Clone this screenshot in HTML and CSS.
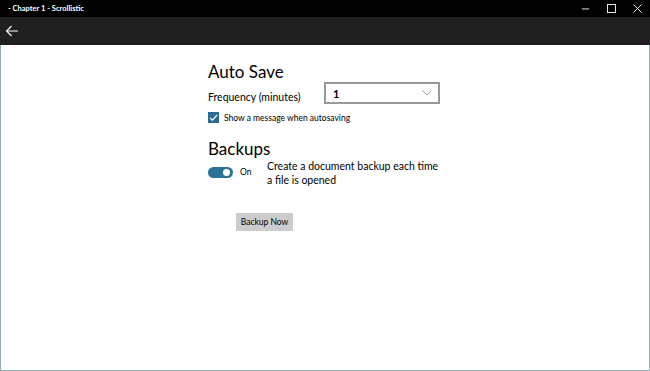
FILE: index.html
```html
<!DOCTYPE html>
<html lang="en">
<head>
  <meta charset="UTF-8" />
  <title>Chapter 1 - Scrollistic</title>
  <link rel="stylesheet" href="styles.css">
</head>
<body>
  <div class="window">
    <div class="titlebar">
      <span class="title">- Chapter 1 - Scrollistic</span>
      <div class="controls">
        <span class="ctl">
          <svg width="9" height="9" viewBox="0 0 10 10"><path d="M1 5.5h8" stroke="#fff" stroke-width="1"/></svg>
        </span>
        <span class="ctl">
          <svg width="9" height="9" viewBox="0 0 10 10"><rect x="0.5" y="0.5" width="9" height="9" fill="none" stroke="#fff" stroke-width="1"/></svg>
        </span>
        <span class="ctl">
          <svg width="9" height="9" viewBox="0 0 10 10"><path d="M0.5 0.5l9 9M9.5 0.5l-9 9" stroke="#fff" stroke-width="1"/></svg>
        </span>
      </div>
    </div>

    <div class="navbar">
      <svg class="back" width="14" height="12" viewBox="0 0 14 12">
        <path d="M13 6H1.5M6.5 1L1.5 6l5 5" fill="none" stroke="#fff" stroke-width="1.1"/>
      </svg>
    </div>

    <div class="content">
      <div class="settings">
        <h2>Auto Save</h2>
        <div class="freq-row">
          <span class="label">Frequency (minutes)</span>
          <div class="dropdown">
            <span class="value">1</span>
            <svg width="10" height="6" viewBox="0 0 10 6"><path d="M0.5 0.5L5 5l4.5-4.5" fill="none" stroke="#999" stroke-width="1"/></svg>
          </div>
        </div>
        <label class="check-row">
          <span class="checkbox">
            <svg width="11" height="11" viewBox="0 0 11 11"><path d="M2 5.8l2.4 2.4L9.2 3" fill="none" stroke="#fff" stroke-width="1.2"/></svg>
          </span>
          <span class="small">Show a message when autosaving</span>
        </label>

        <h2 class="backups">Backups</h2>
        <div class="toggle-row">
          <span class="toggle"><span class="knob"></span></span>
          <span class="small on">On</span>
          <span class="desc">Create a document backup each time<br>a file is opened</span>
        </div>

        <button class="btn">Backup Now</button>
      </div>
    </div>
  </div>
</body>
</html>
```

FILE: styles.css
```css
* {
  box-sizing: border-box;
}

html, body {
  margin: 0;
  height: 100%;
}

body {
  font-family: 'Lato', 'Noto Sans', sans-serif;
  color: #000;
  background: #fff;
}

.window {
  height: 371px;
  border: 1px solid #8fb1bb;
  display: flex;
  flex-direction: column;
}

.titlebar {
  height: 17px;
  background: #000;
  color: #fff;
  display: flex;
  align-items: center;
  justify-content: space-between;
  margin: -1px -1px 0;
}

.title {
  font-size: 7.5px;
  font-weight: 700;
  padding-left: 8px;
}

.controls {
  display: flex;
}

.ctl {
  width: 26px;
  display: flex;
  justify-content: center;
}

.navbar {
  height: 28px;
  background: #1f1f1f;
  display: flex;
  align-items: center;
  padding-left: 5px;
  margin: 0 -1px;
}

.content {
  flex: 1;
  padding: 16px 0 0 207px;
}

.settings {
  display: flex;
  flex-direction: column;
  align-items: flex-start;
}

h2 {
  font-size: 17px;
  font-weight: 400;
  margin: 0;
  line-height: 22px;
}

.freq-row {
  display: flex;
  align-items: flex-start;
  margin-top: -1px;
}

.label {
  font-size: 10.5px;
  width: 116px;
  padding-top: 9px;
}

.dropdown {
  width: 116px;
  height: 22px;
  border: 2px solid #999;
  display: flex;
  align-items: center;
  justify-content: space-between;
  padding: 0 6px 0 7px;
}

.value {
  font-size: 11px;
  font-weight: 700;
}

.check-row {
  display: flex;
  align-items: center;
  margin-top: 8px;
}

.checkbox {
  width: 11px;
  height: 11px;
  background: #2d6b97;
  display: flex;
  margin-right: 5px;
}

.small {
  font-size: 8.5px;
}

.backups {
  margin-top: 15px;
}

.toggle-row {
  display: flex;
  align-items: flex-start;
  margin-top: 2px;
}

.toggle {
  width: 25px;
  height: 11px;
  border-radius: 6px;
  background: #2b7294;
  display: flex;
  align-items: center;
  justify-content: flex-end;
  padding-right: 3px;
  margin-top: 5px;
}

.knob {
  width: 7px;
  height: 7px;
  border-radius: 50%;
  background: #fff;
}

.on {
  margin-left: 7px;
  margin-top: 5px;
  width: 27px;
}

.desc {
  font-size: 10.5px;
  line-height: 14px;
  margin-top: -3px;
}

.btn {
  margin: 26px 0 0 28px;
  font-family: inherit;
  font-size: 8.5px;
  background: #cccccc;
  border: none;
  border-radius: 0;
  height: 18px;
  width: 57px;
  padding: 0;
  color: #000;
}
```
